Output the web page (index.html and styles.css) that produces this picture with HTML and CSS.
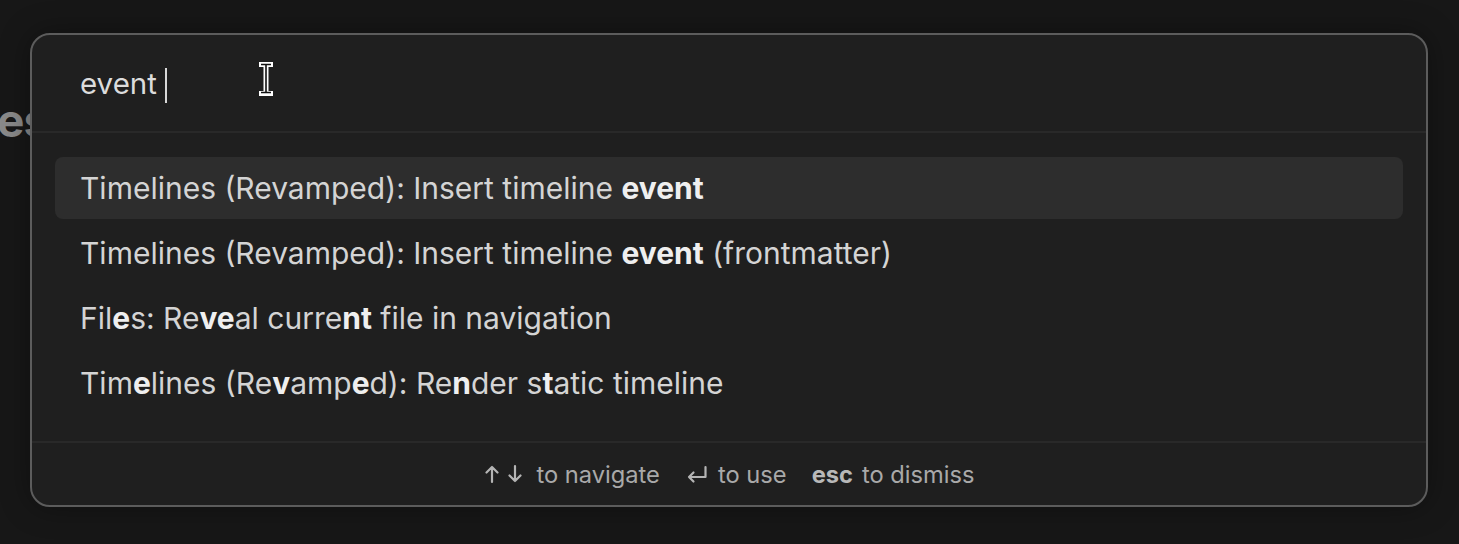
FILE: index.html
```html
<!DOCTYPE html>
<html>
<head>
<meta charset="utf-8">
<link rel="stylesheet" href="styles.css">
</head>
<body>
<div class="page">
  <h1 class="bg-title">es</h1>
</div>
<div class="modal">
  <div class="prompt">
    <span class="query">event</span><span class="caret"></span>
  </div>
  <ul class="results">
    <li class="item selected">Timelines (Revamped): Insert timeline <b>event</b></li>
    <li class="item">Timelines (Revamped): Insert timeline <b>event</b> (frontmatter)</li>
    <li class="item">Fil<b>e</b>s: Re<b>ve</b>al curre<b>nt</b> file in navigation</li>
    <li class="item">Tim<b>e</b>lines (Re<b>v</b>amp<b>e</b>d): Re<b>n</b>der s<b>t</b>atic timeline</li>
  </ul>
  <div class="footer">
    <span class="hint">
      <svg class="key" width="40" height="20" viewBox="0 0 40 20"><path d="M7 18V3M1.5 8.5L7 3l5.5 5.5M30 2v15M24.5 11.5L30 17l5.5-5.5" fill="none" stroke="#b4b4b4" stroke-width="2.2" stroke-linecap="round" stroke-linejoin="round"/></svg>
      to navigate
    </span>
    <span class="hint">
      <svg class="key" width="20" height="20" viewBox="0 0 20 20"><path d="M18.5 3v10H2M6.5 8.5L2 13l4.5 4.5" fill="none" stroke="#b4b4b4" stroke-width="2.2" stroke-linecap="round" stroke-linejoin="round"/></svg>
      to use
    </span>
    <span class="hint"><b>esc</b> to dismiss</span>
  </div>
</div>
<svg class="ibeam" width="16" height="36" viewBox="0 0 16 36"><path d="M1 1h14v5h-4.5v24h4.5v5h-14v-5h4.5v-24h-4.5z" fill="#ffffff"/><path d="M3 3.5h10M8 3.5v28M3 31.5h10" fill="none" stroke="#111" stroke-width="1.6"/></svg>
</body>
</html>
```
FILE: styles.css
```css
html, body {
  margin: 0;
  padding: 0;
  background: #171717;
  width: 1459px;
  height: 544px;
  overflow: hidden;
  font-family: Inter, "Noto Sans", sans-serif;
}
.page {
  padding-top: 92px;
}
.bg-title {
  margin: 0 0 0 -3px;
  font-size: 46px;
  font-weight: 700;
  color: #8a8a8a;
  letter-spacing: -1px;
}
.modal {
  position: absolute;
  left: 30px;
  top: 33px;
  width: 1398px;
  height: 474px;
  box-sizing: border-box;
  background: #1f1f1f;
  border: 2px solid #5c5c5c;
  border-radius: 20px;
  display: flex;
  flex-direction: column;
  box-shadow: 0 0 30px rgba(0,0,0,0.35);
}
.prompt {
  height: 98px;
  flex: none;
  box-sizing: border-box;
  padding-left: 48px;
  display: flex;
  align-items: center;
  border-bottom: 2px solid #292929;
  color: #dcdcdc;
  font-size: 29.5px;
}
.caret {
  display: inline-block;
  width: 2px;
  height: 35px;
  background: #d8d8d8;
  margin-left: 8px;
  margin-top: 4px;
}
.results {
  list-style: none;
  margin: 0;
  padding: 24px 23px 0;
  display: flex;
  flex-direction: column;
  gap: 3px;
  height: 310px;
  flex: none;
  box-sizing: border-box;
  border-bottom: 2px solid #292929;
}
.item {
  height: 62px;
  flex: none;
  display: flex;
  align-items: center;
  padding-left: 25px;
  border-radius: 8px;
  color: #d4d4d4;
  font-size: 30px;
  white-space: pre;
}
.item b {
  font-weight: 700;
  color: #efefef;
}
.item.selected {
  background: #2d2d2d;
}
.footer {
  flex: 1;
  display: flex;
  justify-content: center;
  align-items: center;
  gap: 27px;
  color: #a9a9a9;
  font-size: 23.7px;
  padding-left: 2px;
}
.hint {
  display: flex;
  align-items: center;
  gap: 11px;
}
.hint:last-child {
  margin-left: -2px;
  gap: 9px;
}
.hint b {
  font-weight: 700;
  color: #b8b8b8;
}
.key {
  display: block;
}
.ibeam {
  position: absolute;
  left: 258px;
  top: 61px;
}
```
